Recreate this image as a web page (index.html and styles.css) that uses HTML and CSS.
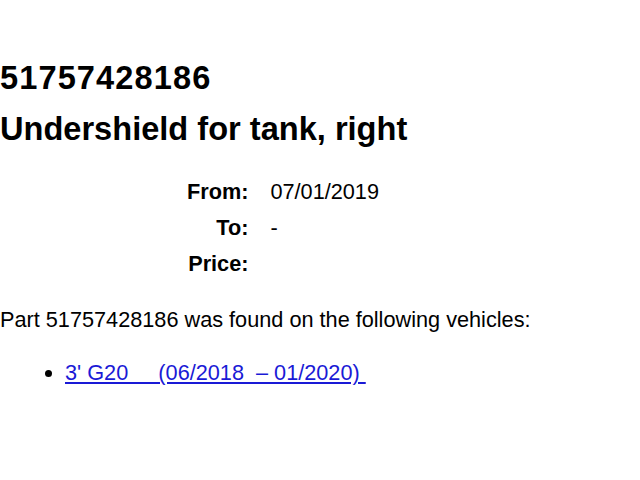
FILE: index.html
```html
<!DOCTYPE html>
<html lang="en">
<head>
<meta charset="utf-8">
<title>51757428186 Undershield for tank, right</title>
<link rel="stylesheet" href="styles.css">
</head>
<body>
<h1 class="part-number">51757428186</h1>
<h2 class="part-name">Undershield for tank, right</h2>
<table class="details">
  <tr><th>From:</th><td>07/01/2019</td></tr>
  <tr><th>To:</th><td>-</td></tr>
  <tr><th>Price:</th><td></td></tr>
</table>
<p class="found">Part 51757428186 was found on the following vehicles:</p>
<ul class="vehicles">
  <li><a href="#">3' G20&nbsp;&nbsp;&nbsp;&nbsp;&nbsp;(06/2018&nbsp; – 01/2020)&nbsp;</a></li>
</ul>
</body>
</html>
```
FILE: styles.css
```css
html, body {
  margin: 0;
  padding: 0;
  background: #fff;
}
body {
  font-family: "Liberation Sans", Arial, Helvetica, sans-serif;
  font-size: 21.7px;
  line-height: 26px;
  color: #000;
}
.part-number,
.part-name {
  font-size: 32.6px;
  line-height: 37px;
  font-weight: bold;
  margin: 0;
}
.part-number {
  padding-top: 59px;
  letter-spacing: 1.1px;
}
.part-name {
  margin-top: 14px;
}
.details {
  margin: 27px 0 0 176px;
  border-collapse: collapse;
}
.details th {
  text-align: right;
  font-weight: bold;
  padding: 5px 11px;
}
.details td {
  text-align: left;
  padding: 5px 11px;
}
.found {
  margin: 24.5px 0 0 0;
}
.vehicles {
  margin: 27.5px 0 0 0;
  padding-left: 65px;
}
.vehicles a {
  color: #1a1ad6;
  text-decoration: underline;
}
```
